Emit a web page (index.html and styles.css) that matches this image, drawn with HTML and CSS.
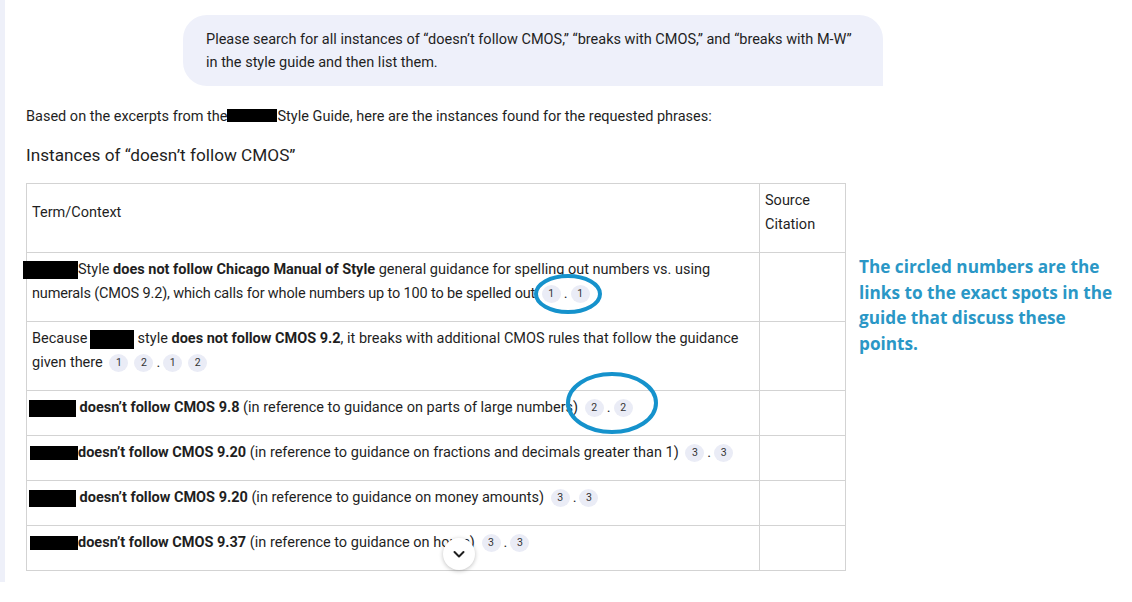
FILE: index.html
```html
<!DOCTYPE html>
<html lang="en">
<head>
<meta charset="UTF-8">
<meta name="viewport" content="width=device-width, initial-scale=1.0">
<title>Instances of CMOS exceptions</title>
<link rel="stylesheet" href="styles.css">
</head>
<body>

<div class="page">
    <div class="rail"></div>

    <div class="chat">
        <div class="prompt">
            Please search for all instances of “doesn’t follow CMOS,” “breaks with CMOS,” and “breaks with M-W” in the style guide and then list them.
        </div>

        <p class="intro">Based on the excerpts from the<span class="redact intro-redact"></span>Style Guide, here are the instances found for the requested phrases:</p>

        <h3>Instances of “doesn’t follow CMOS”</h3>

        <div class="result">
            <table>
                <tr>
                    <th class="term">Term/Context</th>
                    <th class="source">Source Citation</th>
                </tr>
                <tr>
                    <td><span class="redact r1"></span>Style <b>does not follow Chicago Manual of Style</b> general guidance for spelling out numbers vs. using <span class="tight">numerals (CMOS 9.2), which calls for whole numbers up to 100 to be spelled out</span> <span class="cite">1</span>.<span class="cite">1</span></td>
                    <td></td>
                </tr>
                <tr>
                    <td>Because <span class="redact r2"></span> style <b>does not follow CMOS 9.2</b>, it breaks with additional CMOS rules that follow the guidance given there <span class="cite">1</span><span class="cite">2</span>.<span class="cite">1</span><span class="cite">2</span></td>
                    <td></td>
                </tr>
                <tr>
                    <td><span class="redact r3"></span> <b>doesn’t follow CMOS 9.8</b> (in reference to guidance on parts of large numbers) <span class="cite">2</span>.<span class="cite">2</span></td>
                    <td></td>
                </tr>
                <tr>
                    <td><span class="redact r4"></span><b>doesn’t follow CMOS 9.20</b> (in reference to guidance on fractions and decimals greater than 1) <span class="cite">3</span>.<span class="cite">3</span></td>
                    <td></td>
                </tr>
                <tr>
                    <td><span class="redact r3"></span> <b>doesn’t follow CMOS 9.20</b> (in reference to guidance on money amounts) <span class="cite">3</span>.<span class="cite">3</span></td>
                    <td></td>
                </tr>
                <tr>
                    <td><span class="redact r4"></span><b>doesn’t follow CMOS 9.37</b> (in reference to guidance on hours) <span class="cite">3</span>.<span class="cite">3</span></td>
                    <td></td>
                </tr>
            </table>

            <p class="note">The circled numbers are the links to the exact spots in the guide that discuss these points.</p>
        </div>
    </div>

    <!-- hand-drawn annotation circles -->
    <svg class="marks" width="1132" height="602" viewBox="0 0 1132 602">
        <ellipse cx="568" cy="294" rx="32" ry="18" />
        <ellipse cx="612" cy="403" rx="44" ry="29" />
    </svg>

    <button class="scroll-down" aria-label="Scroll down">
        <svg width="16" height="16" viewBox="0 0 16 16"><path d="M3.5 6 L8 10.5 L12.5 6" /></svg>
    </button>
</div>

</body>
</html>
```

FILE: styles.css
```css
body {
    margin: 0;
    font-family: Roboto, "Liberation Sans", Arial, sans-serif;
    color: #1f1f1f;
    background-color: #fff;
}

.page {
    position: relative;
    display: flex;
    width: 1132px;
    height: 602px;
    overflow: hidden;
}

.rail {
    width: 5px;
    height: 582px;
    background-color: #eef0f9;
}

.chat {
    flex: 1;
    padding-left: 21px;
}

.prompt {
    width: 700px;
    box-sizing: border-box;
    margin: 15px 0 0 157px;
    padding: 13px 23px 12px;
    background-color: #eef0fa;
    border-radius: 24px 24px 0 24px;
    font-size: 14.5px;
    line-height: 23px;
}

.intro {
    margin: 19px 0 0;
    font-size: 14.5px;
    line-height: 24px;
}

h3 {
    margin: 14px 0 16px;
    font-size: 17.2px;
    font-weight: 400;
    line-height: 24px;
}

.redact {
    display: inline-block;
    background-color: #000;
    vertical-align: middle;
}

.intro-redact {
    width: 50px;
    height: 13px;
    margin-top: -3px;
}

.result {
    display: flex;
    align-items: flex-start;
}

table {
    width: 820px;
    border-collapse: collapse;
    font-size: 14.5px;
    line-height: 24px;
}

th, td {
    border: 1px solid #d3d3d3;
    padding: 5px 5px 15px;
    text-align: left;
    font-weight: 400;
}

th.term {
    vertical-align: middle;
}

th.source {
    width: 75px;
    vertical-align: top;
}

td {
    height: 24px;
    vertical-align: top;
}

td b {
    font-weight: 700;
    color: #1f1f1f;
}

.tight {
    letter-spacing: -0.15px;
}

.r1 {
    width: 55px;
    height: 18px;
    margin: -4px 0 -4px -9px;
}

.r2 {
    width: 44px;
    height: 19px;
    margin: -4px 0 -4px -1px;
}

.r3 {
    width: 47px;
    height: 17px;
    margin: -4px 0 -4px -3px;
}

.r4 {
    width: 48px;
    height: 14px;
    margin: -2px 0 -2px -2px;
}

.cite {
    display: inline-block;
    width: 19px;
    height: 18px;
    margin: -5px 3px;
    border-radius: 50%;
    background-color: #eaecf6;
    color: #333;
    font-size: 10.5px;
    line-height: 18px;
    text-align: center;
    vertical-align: 1px;
}

.note {
    width: 262px;
    margin: 71px 0 0 13px;
    font-family: "Open Sans", "Liberation Sans", sans-serif;
    font-size: 17.2px;
    font-weight: 700;
    line-height: 25.5px;
    color: #2a97c6;
}

.marks {
    position: absolute;
    left: 0;
    top: 0;
    pointer-events: none;
}

.marks ellipse {
    fill: none;
    stroke: #1592cc;
    stroke-width: 4;
}

.scroll-down {
    position: absolute;
    left: 443px;
    top: 538px;
    width: 32px;
    height: 32px;
    padding: 0;
    border: none;
    border-radius: 50%;
    background-color: #fff;
    box-shadow: 0 1px 4px rgba(0, 0, 0, 0.25);
    display: flex;
    align-items: center;
    justify-content: center;
    cursor: pointer;
}

.scroll-down path {
    fill: none;
    stroke: #1f1f1f;
    stroke-width: 2;
    stroke-linecap: round;
    stroke-linejoin: round;
}
```
